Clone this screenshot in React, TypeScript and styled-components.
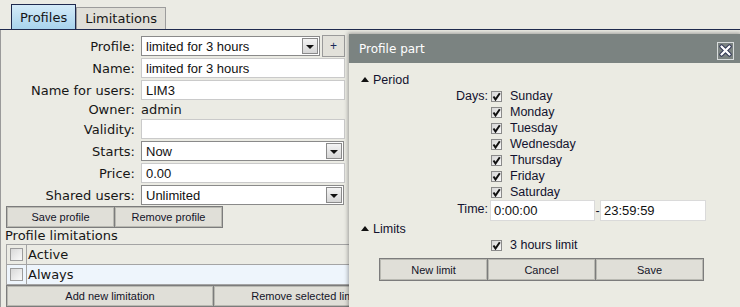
import React from "react";
import styled, { createGlobalStyle, css } from "styled-components";

const GlobalStyle = createGlobalStyle`
  html, body {
    margin: 0;
    padding: 0;
    overflow: hidden;
  }
  body {
    background: #ebebe4;
    font-family: "DejaVu Sans", Verdana, sans-serif;
    color: #161616;
  }
`;

const Page = styled.div`
  position: relative;
  width: 740px;
  height: 307px;
  overflow: hidden;
`;

const TabBar = styled.div`
  display: flex;
  align-items: flex-end;
  height: 29px;
  padding-left: 11px;
  border-bottom: 1px solid #1f2a4e;
`;

const Tab = styled.div<{ $active?: boolean }>`
  box-sizing: border-box;
  display: flex;
  align-items: center;
  font-size: 13px;
  padding: 0 8px;
  ${(p) =>
    p.$active
      ? css`
          height: 25px;
          border: 1px solid #1f2a4e;
          border-bottom: none;
          background: linear-gradient(#d4ebf8, #a8d3ec);
        `
      : css`
          height: 22px;
          border: 1px solid #9c9c9c;
          border-bottom: none;
          background: #e0dfd8;
        `}
`;

const Panel = styled.div`
  border-left: 1px solid #9a9a9a;
  height: 277px;
  padding-top: 6px;
  box-sizing: border-box;
`;

const Form = styled.div`
  display: grid;
  grid-template-columns: 134px 204px;
  column-gap: 6px;
  row-gap: 2px;
  align-items: center;
`;

const Label = styled.div`
  text-align: right;
  font-size: 13px;
  line-height: 15px;
  white-space: nowrap;
`;

const Plain = styled.div`
  font-size: 13px;
  line-height: 15px;
`;

const Field = styled.div<{ $select?: boolean; $width?: number }>`
  box-sizing: border-box;
  height: 20px;
  width: ${(p) => (p.$width ? `${p.$width}px` : "100%")};
  background: #fff;
  border: 1px solid ${(p) => (p.$select ? "#8a8a8a" : "#cacaca")};
  font-family: "Liberation Sans", Arial, sans-serif;
  font-size: 13px;
  color: #111;
  display: flex;
  align-items: center;
  justify-content: space-between;
  padding: 0 1px 0 4px;
  white-space: nowrap;
`;

const DropButton = styled.div`
  box-sizing: border-box;
  width: 16px;
  height: 16px;
  border: 1px solid #8a8a8a;
  background: linear-gradient(#f4f4f4, #d6d6d6);
  display: flex;
  align-items: center;
  justify-content: center;
  &::after {
    content: "";
    border-left: 4px solid transparent;
    border-right: 4px solid transparent;
    border-top: 4px solid #111;
    margin-top: 1px;
  }
`;

const InlineRow = styled.div`
  display: flex;
  align-items: center;
  gap: 2px;
`;

const PlusButton = styled.div`
  box-sizing: border-box;
  width: 23px;
  height: 22px;
  margin: -1px 0;
  border: 1px solid #9a9a9a;
  background: #e2e1da;
  font-family: "Liberation Sans", Arial, sans-serif;
  font-size: 12px;
  display: flex;
  align-items: center;
  justify-content: center;
  color: #1a2a5a;
`;

const ButtonRow = styled.div<{ $left?: number; $top?: number }>`
  display: flex;
  margin-left: ${(p) => p.$left ?? 0}px;
  margin-top: ${(p) => p.$top ?? 0}px;
`;

const Button = styled.div<{ $width: number; $height?: number }>`
  box-sizing: border-box;
  width: ${(p) => p.$width}px;
  height: ${(p) => p.$height ?? 22}px;
  border: 1px solid #7c7c7c;
  box-shadow: inset 0 0 0 1px #b9b9b2;
  background: #e0dfd8;
  font-family: "Liberation Sans", Arial, sans-serif;
  font-size: 11px;
  color: #141428;
  display: flex;
  align-items: center;
  justify-content: center;
  white-space: nowrap;
  overflow: hidden;
  & + & {
    margin-left: -1px;
  }
`;

const SectionTitle = styled.div`
  font-size: 13px;
  line-height: 16px;
  margin-left: 4px;
`;

const Table = styled.div`
  margin-left: 5px;
  width: 414px;
  border-top: 1px solid #a4a4a4;
  border-left: 1px solid #a4a4a4;
`;

const TableRow = styled.div<{ $alt?: boolean }>`
  box-sizing: border-box;
  display: grid;
  grid-template-columns: 20px 1fr;
  height: 20px;
  border-bottom: 1px solid #a4a4a4;
  background: ${(p) => (p.$alt ? "#eef5fc" : "transparent")};
`;

const CheckCell = styled.div`
  border-right: 1px solid #a4a4a4;
  display: flex;
  align-items: center;
  justify-content: center;
`;

const Box = styled.div`
  box-sizing: border-box;
  width: 13px;
  height: 13px;
  border: 1px solid #9c9c9c;
  background: linear-gradient(135deg, #d8d8d8, #fafafa);
`;

const CellText = styled.div`
  font-size: 13px;
  padding-left: 1px;
  display: flex;
  align-items: center;
`;

/* dialog */

const Dialog = styled.div`
  position: absolute;
  left: 349px;
  top: 34px;
  width: 391px;
  height: 290px;
  background: #ebebe3;
  box-shadow: 0 0 4px 1px rgba(60, 60, 60, 0.45);
`;

const TitleBar = styled.div`
  height: 29px;
  background: #7b8381;
  display: flex;
  align-items: center;
  justify-content: space-between;
  padding: 0 6px 0 10px;
`;

const Title = styled.div`
  color: #fff;
  font-size: 12px;
  padding-top: 1px;
`;

const CloseBox = styled.div`
  box-sizing: border-box;
  width: 17px;
  height: 18px;
  margin-top: 4px;
  border: 1px solid #d8dcdc;
  display: flex;
  align-items: center;
  justify-content: center;
`;

const Heading = styled.div<{ $top?: number }>`
  display: flex;
  align-items: center;
  gap: 4px;
  padding-left: 12px;
  margin-top: ${(p) => p.$top ?? 0}px;
  height: 16px;
  font-family: "Liberation Sans", Arial, sans-serif;
  font-size: 12.5px;
  color: #12122e;
  &::before {
    content: "";
    border-left: 4px solid transparent;
    border-right: 4px solid transparent;
    border-bottom: 5px solid #111;
    margin-top: -1px;
  }
`;

const DlgGrid = styled.div`
  display: grid;
  grid-template-columns: 139px auto;
  column-gap: 2px;
  grid-auto-rows: 16px;
  font-family: "Liberation Sans", Arial, sans-serif;
  font-size: 12.5px;
  color: #12122e;
`;

const DlgLabel = styled.div`
  text-align: right;
  line-height: 16px;
`;

const DayItem = styled.div`
  display: flex;
  align-items: center;
  gap: 8px;
  padding-left: 1px;
`;

const CheckSquare = styled.div`
  box-sizing: border-box;
  width: 11px;
  height: 11px;
  border: 1px solid #8a8a8a;
  background: linear-gradient(135deg, #d6d6d6, #f8f8f8);
  display: flex;
  align-items: center;
  justify-content: center;
`;

const TimeRow = styled.div`
  display: grid;
  grid-template-columns: 139px auto;
  column-gap: 2px;
  height: 21px;
  font-family: "Liberation Sans", Arial, sans-serif;
  font-size: 12.5px;
  color: #12122e;
`;

const TimeLabel = styled.div`
  text-align: right;
  padding-top: 2px;
`;

const TimeFields = styled.div`
  display: flex;
  align-items: center;
`;

const Dash = styled.span`
  width: 5px;
  text-align: center;
`;

const TimeField = styled(Field)`
  height: 21px;
  border-color: #dadada;
  padding-left: 3px;
  font-size: 13px;
`;

const Check = () => (
  <svg width="9" height="9" viewBox="0 0 9 9">
    <path d="M1.5 4.5 L3.5 7.5 L7.8 1.2" fill="none" stroke="#111" strokeWidth="2" />
  </svg>
);

const CloseIcon = () => (
  <svg width="13" height="13" viewBox="0 0 13 13">
    <path d="M2.5 2.5 L10.5 10.5 M10.5 2.5 L2.5 10.5" stroke="#2a3050" strokeWidth="4.2" strokeLinecap="round" />
    <path d="M2.5 2.5 L10.5 10.5 M10.5 2.5 L2.5 10.5" stroke="#fff" strokeWidth="2.4" strokeLinecap="round" />
  </svg>
);

const days = ["Sunday", "Monday", "Tuesday", "Wednesday", "Thursday", "Friday", "Saturday"];

export default function App() {
  return (
    <>
      <GlobalStyle />
      <Page>
        <TabBar>
          <Tab $active>Profiles</Tab>
          <Tab>Limitations</Tab>
        </TabBar>
        <Panel>
          <Form>
            <Label>Profile:</Label>
            <InlineRow>
              <Field $select $width={181}>
                limited for 3 hours
                <DropButton />
              </Field>
              <PlusButton>+</PlusButton>
            </InlineRow>
            <Label>Name:</Label>
            <Field>limited for 3 hours</Field>
            <Label>Name for users:</Label>
            <Field>LIM3</Field>
            <Label>Owner:</Label>
            <Plain>admin</Plain>
            <Label>Validity:</Label>
            <Field />
            <Label>Starts:</Label>
            <Field $select $width={203}>
              Now
              <DropButton />
            </Field>
            <Label>Price:</Label>
            <Field>0.00</Field>
            <Label>Shared users:</Label>
            <Field $select $width={203}>
              Unlimited
              <DropButton />
            </Field>
          </Form>
          <ButtonRow $left={5} $top={1}>
            <Button $width={109}>Save profile</Button>
            <Button $width={109}>Remove profile</Button>
          </ButtonRow>
          <SectionTitle>Profile limitations</SectionTitle>
          <Table>
            <TableRow>
              <CheckCell>
                <Box />
              </CheckCell>
              <CellText>Active</CellText>
            </TableRow>
            <TableRow $alt>
              <CheckCell>
                <Box />
              </CheckCell>
              <CellText>Always</CellText>
            </TableRow>
          </Table>
          <ButtonRow $left={5}>
            <Button $width={208} $height={22}>Add new limitation</Button>
            <Button $width={208} $height={22}>Remove selected limitation</Button>
          </ButtonRow>
        </Panel>

        <Dialog>
          <TitleBar>
            <Title>Profile part</Title>
            <CloseBox>
              <CloseIcon />
            </CloseBox>
          </TitleBar>
          <Heading $top={9}>Period</Heading>
          <DlgGrid>
            {days.map((d, i) => (
              <React.Fragment key={d}>
                <DlgLabel>{i === 0 ? "Days:" : ""}</DlgLabel>
                <DayItem>
                  <CheckSquare>
                    <Check />
                  </CheckSquare>
                  {d}
                </DayItem>
              </React.Fragment>
            ))}
          </DlgGrid>
          <TimeRow>
            <TimeLabel>Time:</TimeLabel>
            <TimeFields>
              <TimeField $width={105}>0:00:00</TimeField>
              <Dash>-</Dash>
              <TimeField $width={106}>23:59:59</TimeField>
            </TimeFields>
          </TimeRow>
          <Heading>Limits</Heading>
          <DlgGrid>
            <DlgLabel />
            <DayItem>
              <CheckSquare>
                <Check />
              </CheckSquare>
              3 hours limit
            </DayItem>
          </DlgGrid>
          <ButtonRow $left={30} $top={5}>
            <Button $width={109} $height={23}>New limit</Button>
            <Button $width={109} $height={23}>Cancel</Button>
            <Button $width={109} $height={23}>Save</Button>
          </ButtonRow>
        </Dialog>
      </Page>
    </>
  );
}
